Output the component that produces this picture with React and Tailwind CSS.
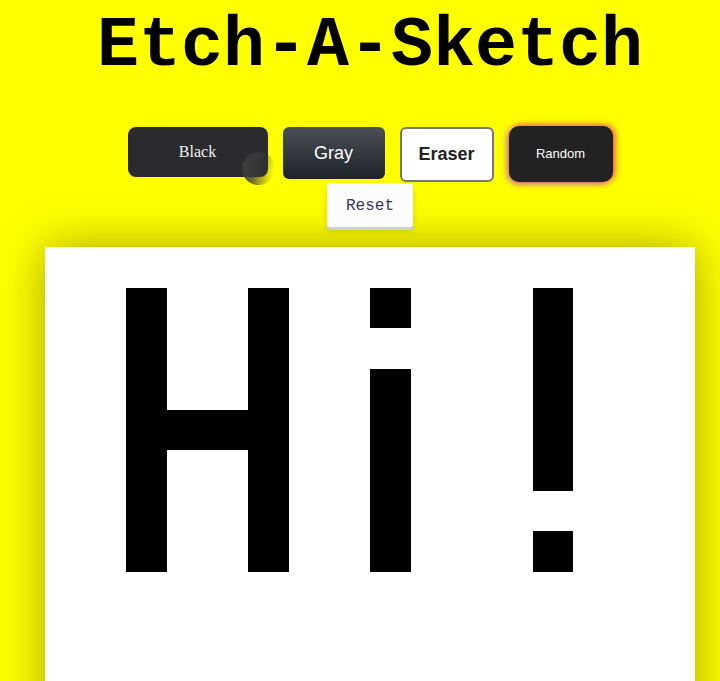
import React from "react";

const cells = new Set();
const add = (c, r) => cells.add(r * 16 + c);
for (let r = 1; r <= 7; r++) { add(2, r); add(5, r); }
add(3, 4); add(4, 4);
add(8, 1); for (let r = 3; r <= 7; r++) add(8, r);
for (let r = 1; r <= 5; r++) add(12, r); add(12, 7);

export default function App() {
  return (
    <div className="min-h-[681px] bg-[#ffff00] pl-[20px] overflow-hidden">
      <h1 className="text-center font-bold text-[70px] leading-none pt-[12px] text-black" style={{ fontFamily: '"Liberation Mono", "Courier New", monospace' }}>
        Etch-A-Sketch
      </h1>
      <div className="mx-auto w-[520px] flex flex-wrap justify-center items-start gap-x-[15px] gap-y-[1px] mt-[44px]">
        <div className="relative">
          <button className="w-[140px] h-[50px] mt-[1px] rounded-[8px] bg-[#29292e] text-[#f3f3f3] text-[16px]" style={{ fontFamily: '"Liberation Serif", serif' }}>
            Black
          </button>
          <div className="absolute left-[114px] top-[26px] w-[33px] h-[33px] rounded-full bg-[linear-gradient(100deg,#3c3c40_5%,rgba(60,60,60,0.75)_40%,rgba(60,60,60,0)_90%)]"></div>
        </div>
        <button className="w-[102px] h-[52px] mt-[1px] rounded-[6px] bg-[linear-gradient(to_bottom,#4a4f58,#1f2329)] text-white text-[18px]" style={{ fontFamily: '"Liberation Sans", Arial, sans-serif' }}>
          Gray
        </button>
        <button className="w-[94px] h-[55px] mt-[1px] rounded-[6px] bg-white border-2 border-[#777] text-[#222] font-bold text-[18px]" style={{ fontFamily: '"Liberation Sans", Arial, sans-serif' }}>
          Eraser
        </button>
        <button className="w-[104px] h-[56px] rounded-[10px] bg-[#222] text-white text-[13px] shadow-[2px_-1px_6px_rgba(255,60,90,0.9),-2px_2px_6px_rgba(170,80,220,0.75)]" style={{ fontFamily: '"Liberation Sans", Arial, sans-serif' }}>
          Random
        </button>
        <button className="w-[86px] h-[44px] rounded-[3px] bg-[#fcfcfd] text-[#36395a] text-[16px] pt-[2px] shadow-[0_3px_0_#cfcde0,0_4px_6px_rgba(0,0,0,0.15)]" style={{ fontFamily: '"Liberation Mono", "Courier New", monospace' }}>
          Reset
        </button>
      </div>
      <div className="mx-auto mt-[20px] w-[650px] h-[650px] bg-white grid grid-cols-16 grid-rows-16 shadow-[0_0_45px_rgba(0,0,0,0.35)]">
        {Array.from({ length: 256 }, (_, i) => (
          <div key={i} className={cells.has(i) ? "bg-black" : "bg-white"}></div>
        ))}
      </div>
    </div>
  );
}
